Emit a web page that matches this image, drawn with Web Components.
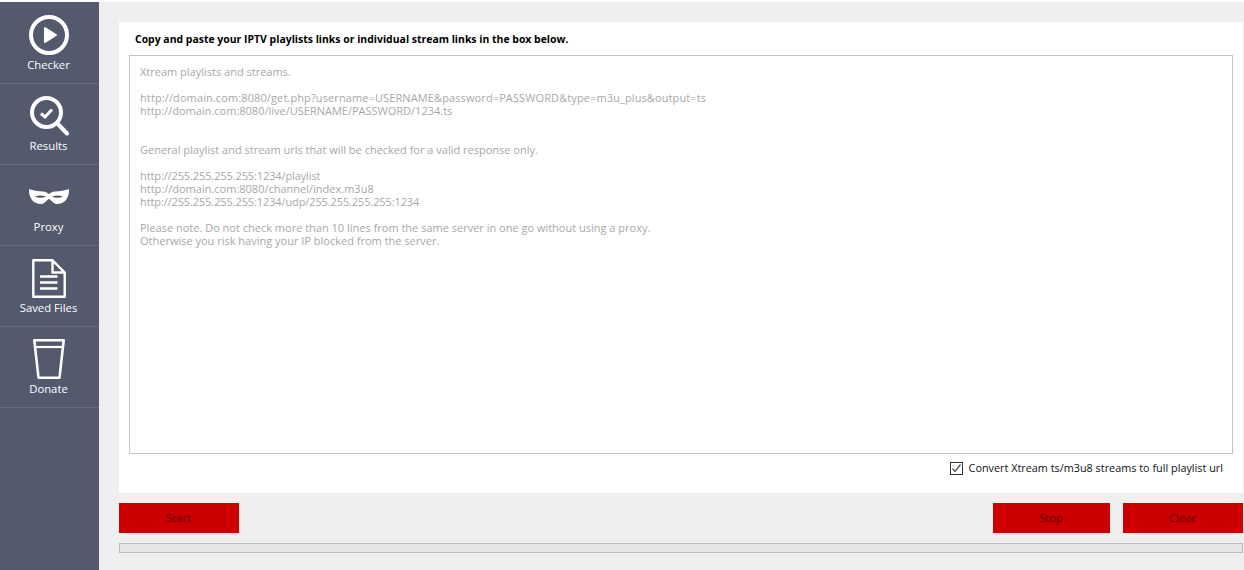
<!DOCTYPE html>
<html><head><meta charset="utf-8">
<style>
html,body{margin:0;height:100%;background:#fff;overflow:hidden}
body{font-family:"Open Sans","Noto Sans",sans-serif}
x-box .w{letter-spacing:.11px}
x-box .n{letter-spacing:-.11px}
</style></head><body>
<template id="t-nav"><style>
:host{display:flex;flex-direction:column;align-items:center;height:81px;box-sizing:border-box;border-bottom:1px solid #666b7e;color:#fff;font-size:11.3px;line-height:14px;padding-right:1px}
.i{height:52px;display:flex;align-items:flex-end;justify-content:center;width:100%}
.l{margin-top:3px;margin-right:1px;white-space:nowrap}
</style><div class="i"><slot name="icon"></slot></div><div class="l"><slot></slot></div></template>
<template id="t-side"><style>
:host{display:flex;flex-direction:column;width:99px;flex:none;background:#535a6e;padding-top:1px;box-sizing:border-box}
</style><slot></slot></template>
<template id="t-btn"><style>
:host{display:flex;align-items:center;justify-content:center;height:30px;background:#cc0000;color:#5c0000;font-size:11.2px;box-sizing:border-box;padding:0 1px 2px 0;cursor:default}
</style><slot></slot></template>
<template id="t-check"><style>
:host{display:flex;align-items:center;justify-content:flex-end;gap:6px;font-size:10.85px;color:#111;height:28px;padding-right:20px;line-height:14px}
.b{width:11px;height:11px;border:1px solid #333;display:block;background:#fff;flex:none}
</style><svg class="b" viewBox="0 0 11 11"><path d="M1.500 5.500 4 8.500 9.500 1.500" fill="none" stroke="#555" stroke-width="1.300"/></svg><span><slot></slot></span></template>
<template id="t-box"><style>
:host{display:block;height:399px;flex:none;margin:0 10px;box-sizing:border-box;border:1px solid #c4c4c4;background:#fff;padding:9px 10px;font-size:11px;line-height:13px;color:#a8a8a8;white-space:pre-line;overflow:hidden}
</style><slot></slot></template>
<template id="t-panel"><style>
:host{display:flex;flex-direction:column;height:471px;background:#fff;box-sizing:border-box}
h1{font-size:10.45px;line-height:14px;font-weight:700;color:#000;margin:0;padding:10px 16px 9px}
</style><h1><slot name="title"></slot></h1><slot></slot></template>
<template id="t-bar"><style>
:host{display:block;height:10px;box-sizing:border-box;border:1px solid #bcbcbc;background:#e6e6e6}
</style></template>
<template id="t-app"><style>
:host{display:flex;height:568px;margin-top:2px;background:#efefef}
main{flex:1;min-width:0;display:flex;flex-direction:column;padding:20px 1px 0 20px}
.acts{display:flex;gap:13px;margin-top:10px}
.sp{flex:1}
.bar{margin-top:10px}
</style><slot name="side"></slot><main><slot name="panel"></slot><div class="acts"><slot name="start"></slot><div class="sp"></div><slot name="stop"></slot><slot name="clear"></slot></div><div class="bar"><slot name="bar"></slot></div></main></template>
<x-app>
<x-side slot="side">
<x-nav><svg slot="icon" width="40" height="40" viewBox="0 0 40 40" style="display:block"><circle cx="20" cy="20" r="18" fill="none" stroke="#fff" stroke-width="4"/><path d="M16 13 27 20 16 27Z" fill="#fff" stroke="#fff" stroke-width="2" stroke-linejoin="round"/></svg>Checker</x-nav>
<x-nav><svg slot="icon" width="40" height="40" viewBox="0 0 40 40" style="display:block"><circle cx="17.500" cy="16.500" r="14.500" fill="none" stroke="#fff" stroke-width="4"/><path d="M28.500 27.500 38 37.500" stroke="#fff" stroke-width="4" stroke-linecap="round"/><path d="M12 17.500 16 21 23 13.500" fill="none" stroke="#fff" stroke-width="3"/></svg>Results</x-nav>
<x-nav><svg slot="icon" width="40" height="15" viewBox="0 0 40 15" style="display:block;margin-bottom:13px"><path fill="#fff" fill-rule="evenodd" d="M0 0C4 1.500 9 2.500 14 2.500 17 2.500 18.500 4 20 5 21.500 4 23 2.500 26 2.500 31 2.500 36 1.500 40 0 40.500 8 36 15 28 15 24 15 22 10.500 20 10 18 10.500 16 15 12 15 4 15-.5 8 0 0ZM6 7.500C9 6 13 6 17 7.500 14 9.300 9 9.300 6 7.500ZM34 7.500C31 6 27 6 23 7.500 26 9.300 31 9.300 34 7.500Z"/></svg>Proxy</x-nav>
<x-nav><svg slot="icon" width="34" height="39" viewBox="0 0 34 39" style="display:block"><path d="M1.300 1.300H20.500L32.700 13.500V37.700H1.300Z M20.500 1.300V13.500H32.700" fill="none" stroke="#fff" stroke-width="2.400" stroke-linejoin="round"/><path d="M8 17.500H25.500M8 23.500H25.500M8 29.500H25.500" stroke="#fff" stroke-width="2.400"/></svg>Saved Files</x-nav>
<x-nav><svg slot="icon" width="32" height="40" viewBox="0 0 32 40" style="display:block"><path d="M1.300 1.300H30.700L26.500 38.700H5.500Z" fill="none" stroke="#fff" stroke-width="2.600" stroke-linejoin="round"/><path d="M2 8H30" stroke="#fff" stroke-width="2.200"/></svg>Donate</x-nav>
</x-side>
<x-panel slot="panel"><span slot="title">Copy and paste your IPTV playlists links or individual stream links in the box below.</span>
<x-box>Xtream playlists and streams.

<span class="w">http://domain.com:8080/get.php?username=USERNAME&amp;password=PASSWORD&amp;type=m3u_plus&amp;output=ts</span>
http://domain.com:8080/live/USERNAME/PASSWORD/1234.ts


General playlist and stream urls that will be checked for a valid response only.

<span class="n">http://255.255.255.255:1234/playlist</span>
http://domain.com:8080/channel/index.m3u8
<span class="n">http://255.255.255.255:1234/udp/255.255.255.255:1234</span>

Please note. Do not check more than 10 lines from the same server in one go without using a proxy.
Otherwise you risk having your IP blocked from the server.</x-box>
<x-check>Convert Xtream ts/m3u8 streams to full playlist url</x-check>
</x-panel>
<x-btn slot="start" style="width:120px">Start</x-btn>
<x-btn slot="stop" style="width:117px">Stop</x-btn>
<x-btn slot="clear" style="width:120px">Clear</x-btn>
<x-bar slot="bar"></x-bar>
</x-app>
<script>
for (const [tag,id] of [['x-app','t-app'],['x-side','t-side'],['x-nav','t-nav'],['x-btn','t-btn'],['x-check','t-check'],['x-box','t-box'],['x-panel','t-panel'],['x-bar','t-bar']]) {
  customElements.define(tag, class extends HTMLElement {
    constructor(){super();this.attachShadow({mode:'open'}).appendChild(document.getElementById(id).content.cloneNode(true));}
  });
}
</script>
</body></html>
